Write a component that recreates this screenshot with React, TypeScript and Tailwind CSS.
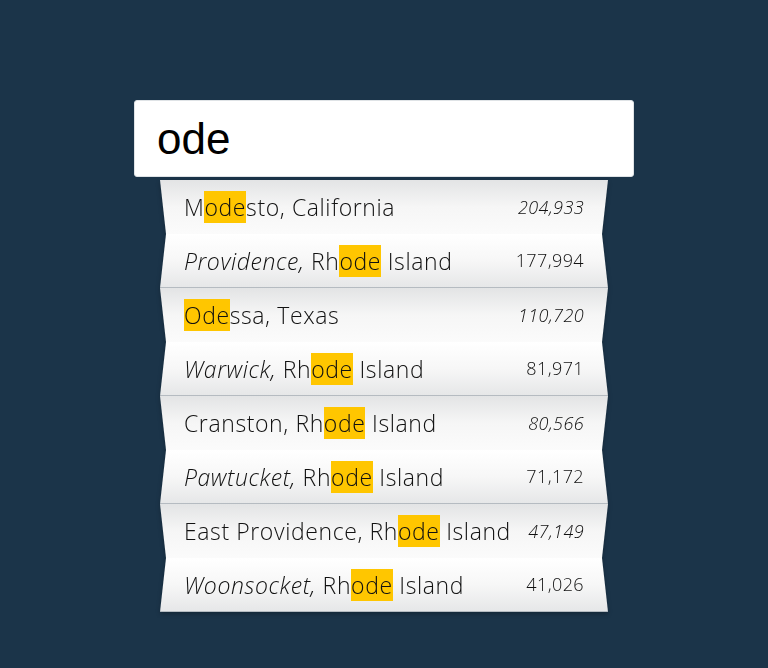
import React from "react";

type City = { city: string; state: string; population: string };

const query = "ode";

const cities: City[] = [
  { city: "Modesto", state: "California", population: "204,933" },
  { city: "Providence", state: "Rhode Island", population: "177,994" },
  { city: "Odessa", state: "Texas", population: "110,720" },
  { city: "Warwick", state: "Rhode Island", population: "81,971" },
  { city: "Cranston", state: "Rhode Island", population: "80,566" },
  { city: "Pawtucket", state: "Rhode Island", population: "71,172" },
  { city: "East Providence", state: "Rhode Island", population: "47,149" },
  { city: "Woonsocket", state: "Rhode Island", population: "41,026" },
];

// Splits "City, State" into runs so the city part can be italic and the
// matched query gets a highlight.
function CityName({ item, italicCity }: { item: City; italicCity: boolean }) {
  const full = `${item.city}, ${item.state}`;
  const start = full.toLowerCase().indexOf(query);
  const end = start + query.length;
  const italicEnd = italicCity ? item.city.length + 1 : 0;

  const cuts = Array.from(new Set([0, italicEnd, start, end, full.length]))
    .filter((n) => n >= 0 && n <= full.length)
    .sort((a, b) => a - b);

  const parts = [];
  for (let i = 0; i < cuts.length - 1; i++) {
    const a = cuts[i];
    const b = cuts[i + 1];
    if (a === b) continue;
    const text = full.slice(a, b);
    const hit = a >= start && b <= end;
    const italic = a < italicEnd;
    parts.push(
      <span
        key={a}
        className={`${italic ? "italic" : ""} ${hit ? "bg-[#ffc600] inline-block leading-[32px]" : ""}`}
      >
        {text}
      </span>
    );
  }
  return <span className="whitespace-pre">{parts}</span>;
}

export default function App() {
  return (
    <div className="min-h-[668px] bg-[#1b3449] flex justify-center pt-[100px]">
      <div className="w-[500px] flex flex-col">
        <div className="h-[77px] bg-white border border-[#dfe3e6] rounded-[3px] flex items-center pl-[22px]">
          <span
            className="text-[44px] text-black leading-none"
            style={{ fontFamily: "'Liberation Sans', Arial, sans-serif" }}
          >
            {query}
          </span>
        </div>

        <ul
          className="mx-[26px] mt-[3px] flex flex-col drop-shadow-[0_2px_2px_rgba(0,0,0,0.25)] text-[#111] font-light"
          style={{ fontFamily: "'Open Sans', sans-serif" }}
        >
          {cities.map((item, i) => {
            const even = i % 2 === 0;
            return (
              <li
                key={item.city}
                className={
                  even
                    ? "h-[54px] flex items-center justify-between px-[24px] bg-linear-to-b from-[#e3e4e5] via-[#f6f6f6] to-[#fbfbfb] [clip-path:polygon(0_0,100%_0,calc(100%-6px)_100%,6px_100%)]"
                    : "h-[54px] flex items-center justify-between px-[24px] bg-linear-to-b from-[#ffffff] via-[#f7f7f7] to-[#e6e7e8] border-b border-[#b5bbc1] [clip-path:polygon(6px_0,calc(100%-6px)_0,100%_100%,0_100%)]"
                }
              >
                <span className="text-[23px] leading-[32px] tracking-[0.6px]">
                  <CityName item={item} italicCity={!even} />
                </span>
                <span className={`text-[18px] tracking-[0.4px] ${even ? "italic" : ""}`}>
                  {item.population}
                </span>
              </li>
            );
          })}
        </ul>
      </div>
    </div>
  );
}
